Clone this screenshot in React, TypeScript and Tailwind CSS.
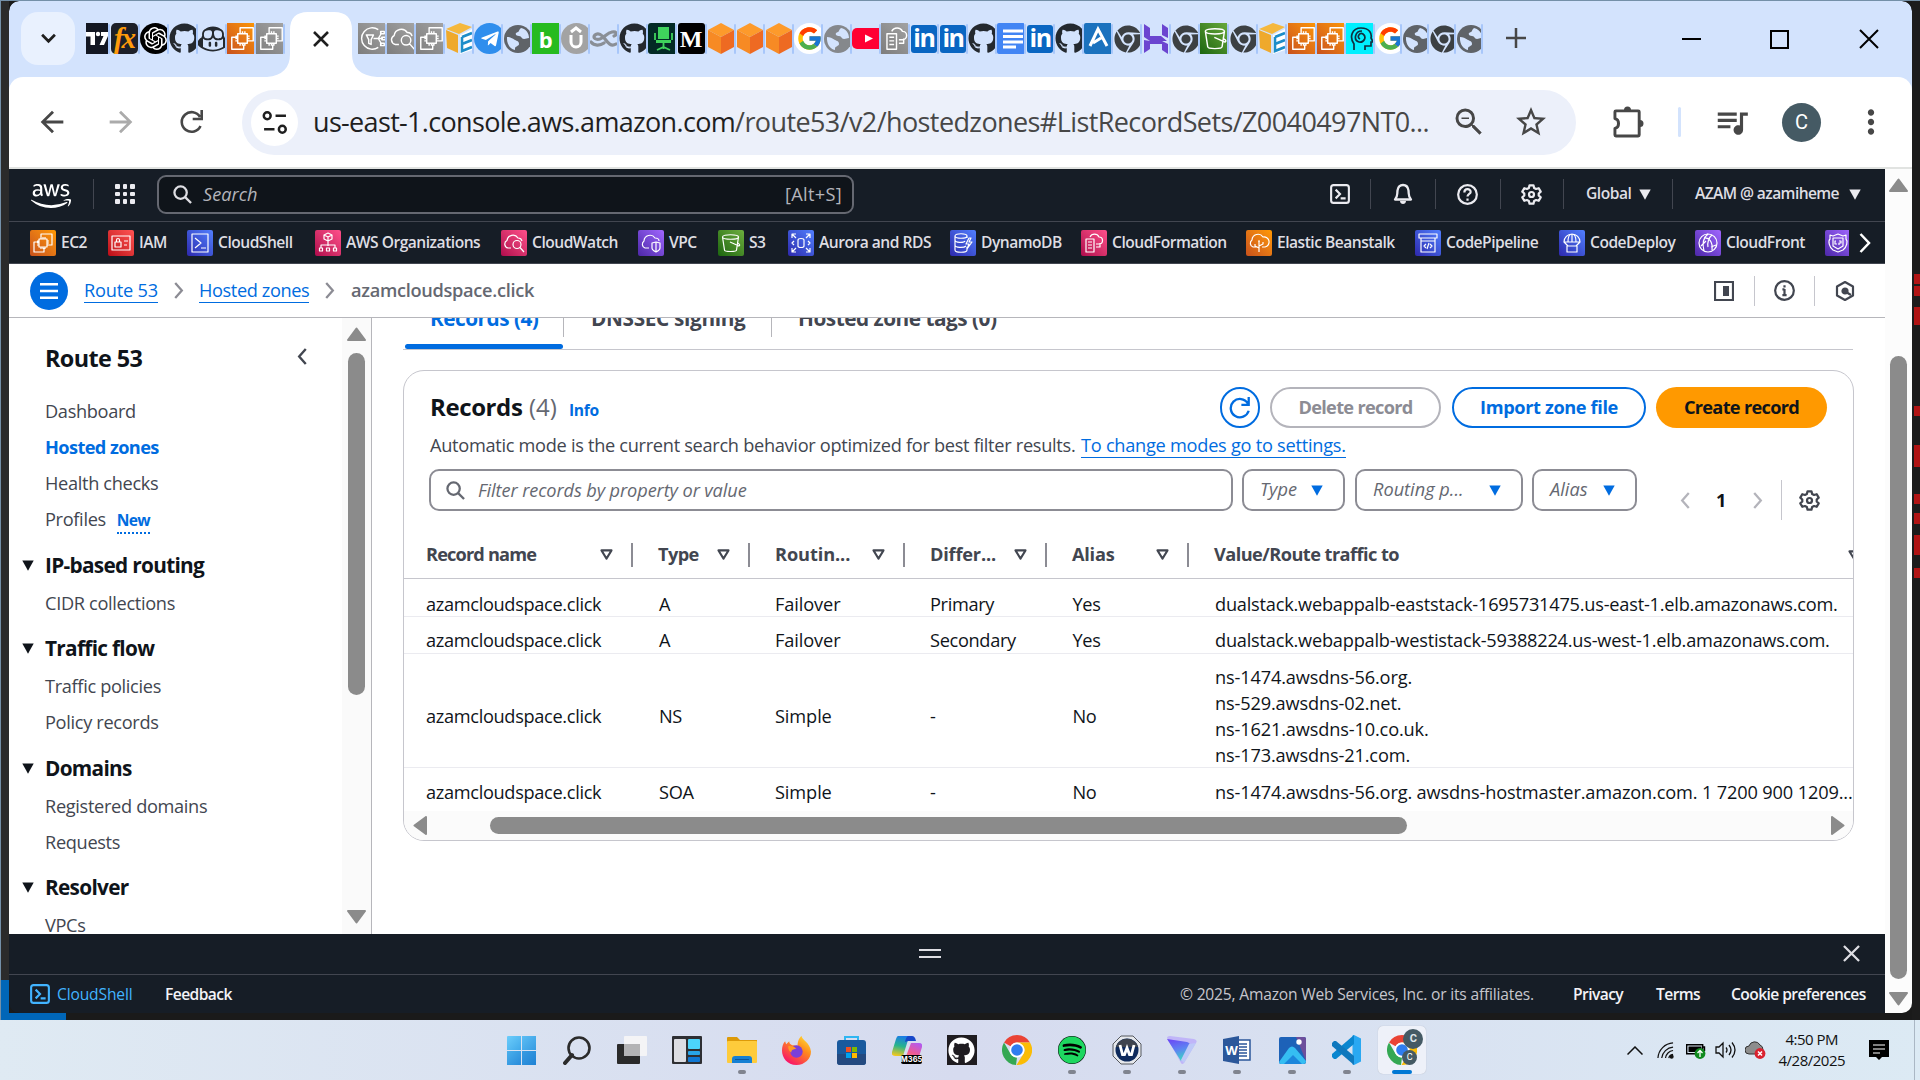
import React from "react";
import { FaGithub, FaTelegramPlane, FaChrome, FaSpotify, FaAws } from "react-icons/fa";
import { SiOpenai, SiGithubcopilot } from "react-icons/si";
import { FcGoogle } from "react-icons/fc";
import { MdArrowBack, MdArrowForward, MdQueueMusic, MdStarBorder, MdZoomOut, MdMoreVert } from "react-icons/md";

const ember = "font-['Open_Sans','Noto_Sans',sans-serif]";

/* ---------- AWS service glyphs ---------- */
const glyphs: Record<string, React.ReactNode> = {
  ec2b: <path d="M9 12H4V22H14V18M11 8V4H22V15H18M9 9h8v8H9zM11 7v2M13 7v2M15 7v2M11 17v2M13 17v2M15 17v2M7 11h2M7 13h2M7 15h2M17 11h2M17 13h2M17 15h2" />,
  iam: <path d="M4 6h18v14H4zM7 12h6v5H7zM8.500 12v-2a1.500 1.500 0 0 1 3 0v2M16 11h4M16 15h3" />,
  shell: <path d="M5 4h16v18H5zM8 8l6 5-6 5M14 18h5" />,
  org: <path d="M13 3l4 2v4l-4 2-4-2V5zM9 5l4 2 4-2M13 7v9M6 18v-3h14v3M4.500 18h3v3h-3zM11.500 18h3v3h-3zM18.500 18h3v3h-3z" />,
  watch: <path d="M10 18H7a4 4 0 0 1-1-7.500 6 6 0 0 1 11-2.500 4 4 0 0 1 4 3M12 14.500a4 4 0 1 0 8 0 4 4 0 1 0-8 0M19 17.500l4 4.500" />,
  vpc: <path d="M11 18H7a4 4 0 0 1-1-7 6 6 0 0 1 11-3c3 0 4 1 4 3M14 13l4-1 4 1v5c0 2-2 3-4 4-2-1-4-2-4-4zM18 12v10" />,
  s3: <path d="M4.500 7l2 13c0 2 12 2 12 0l2-13M4.500 7c0-3 16-3 16 0s-16 3-16 0M12 12l9 4c2-1-1-3-2-3" />,
  rds: <path d="M4 8V4h4M18 4h4v4M22 18v4h-4M8 22H4v-4M4 4l4 4M22 4l-4 4M22 22l-4-4M4 22l4-4M10 10c0-2 6-2 6 0v6c0 2-6 2-6 0zM6 11l-2 2 2 2M20 11l2 2-2 2" />,
  ddb: <path d="M5 6c0-3 12-3 12 0s-12 3-12 0v14c0 3 12 3 12 0v-3M17 6v2M5 10c0 3 9 3 10 1M5 15c0 3 9 3 11 1M19 8l-3 6h3l-2 5 5-7h-3l2-4z" />,
  cfn: <path d="M5 9h8v13H5zM7 12h4M7 15h4M7 18h4M15 17h4v-4M9 7a5 5 0 0 1 9 0 3.500 3.500 0 0 1 0 7h-3" />,
  eb: <path d="M10 17H7a4 4 0 0 1-1-7 6 6 0 0 1 11-3 5 5 0 0 1 2 10h-3M13 11v11M13 18l-4-2v-2M13 16l4-2v-2M12 11h2" />,
  pipe: <path d="M4 4h18v4H4zM6 8h14v3H6zM6 11v11h14V11M11 14l-2 2 2 2M15 14l2 2-2 2M14 13l-2 6" />,
  deploy: <path d="M5 12a8 8 0 0 1 16 0zM9 12c0-4 1-8 4-8s4 4 4 8M13 4v8M5 12l4 4M21 12l-4 4M8 16h10v6H8z" />,
  front: <path d="M4 13a9 9 0 1 0 18 0 9 9 0 1 0-18 0M13 4c-4 3-6 9-4 17M9 8c5-1 9 4 8 12M17 5c-3 2-5 8-4 12M6 16l5-5M16 17l5-2" />,
  shield: <path d="M5 5l3 1 5-2 5 2 3-1v4c2 2 1 8-3 11l-5 2-5-2c-4-3-5-9-3-11zM8 8h10v8l-5 3-5-3zM11 11h-1v3h2M14 11h2v2h-2v2" />,
  route: <path d="M17 5.500A9 9 0 1 0 17 20.500M7 10h6l-2 4v4l-2-1v-3zM13 13h4M17 13l3-5M17 13h4M17 13l3 5M19 7h3v2h-3zM20 12h3v2h-3zM19 17h3v2h-3z" />,
};

const tones = {
  orange: "bg-linear-to-tr from-[#c8511b] to-[#ff9900]",
  red: "bg-linear-to-tr from-[#bd0816] to-[#ff5252]",
  blue: "bg-linear-to-tr from-[#2e27ad] to-[#527fff]",
  pink: "bg-linear-to-tr from-[#b0084d] to-[#ff4f8b]",
  purple: "bg-linear-to-tr from-[#4d27a8] to-[#a166ff]",
  green: "bg-linear-to-tr from-[#1b660f] to-[#6cae3e]",
  gray: "bg-linear-to-tr from-[#7d7d7d] to-[#a5a5a5]",
};
type Tone = keyof typeof tones;

function Service({ g, tone, size = "size-[26px] rounded-[2px]" }: { g: string; tone: Tone; size?: string }) {
  return (
    <span className={`${tones[tone]} ${size} block shrink-0`}>
      <svg viewBox="0 0 26 26" className="size-full" fill="none" stroke="#fff" strokeWidth="1.2" strokeLinejoin="round">{glyphs[g]}</svg>
    </span>
  );
}

/* ---------- tab favicons ---------- */
const big = "size-[31px]";
const Globe = ({ c = "text-[#5f6368]" }: { c?: string }) => (
  <svg viewBox="0 0 28 28" className={`ml-px size-[28px] ${c}`}>
    <circle cx="14" cy="14" r="14" fill="currentColor" />
    <path d="M3 12c3 0 5 1 8 3 2 1 4 1 4 4 0 2-3 2-4 4v2C6 24 2.500 19 3 12zM17 3c5 1 8 5 8 10-2 0-3 1-5 1-3 0-2-3-5-3-2 0-4-1-3-3 1-1 3-1 3-2s1-2 2-3z" fill="#d3e3fd" />
  </svg>
);
const Hex = () => (
  <svg viewBox="0 0 31 31" className={big}>
    <path d="M1 7l13-7 13 7-13 7z" fill="#fd9a2b" /><path d="M1 7l13 7v17L1 24z" fill="#f78a24" /><path d="M27 7l-13 7v17l13-7z" fill="#ee6a22" />
  </svg>
);
const Cube = () => (
  <svg viewBox="0 0 31 31" className={big}>
    <path d="M1 6l14-6 12 4-13 7z" fill="#f5b83d" /><path d="M1 7l12 5v18L2 25z" fill="#efa92c" /><path d="M15 12l12-6v21l-12 4z" fill="#fff" />
    <path d="M17 14l10-4M17 14v14l10-4M17 21l10-4" stroke="#1c8dc9" strokeWidth="2.600" fill="none" />
  </svg>
);
const Doc = () => (
  <svg viewBox="0 0 31 31" className={big}>
    <rect width="28" height="31" rx="2" fill="#4285f4" /><path d="M6 8h20M6 13.500h20M6 19h20M6 24h13" stroke="#fff" strokeWidth="3" />
  </svg>
);
const In = () => <span className="ml-px flex h-[28px] w-[26px] items-center justify-center rounded-[3px] bg-[#0a66c2] pb-[2px] text-[25px] font-bold leading-none text-white font-['Open_Sans',sans-serif] tracking-[-1.5px]">in</span>;
const Git = () => <FaGithub className="size-[31px] text-[#24292f]" />;
const Chr = () => <FaChrome className="size-[28px] text-[#3c4043] ml-[1px]" />;

const tabsLeft: React.ReactNode[] = [
  <svg viewBox="0 0 31 31" className="size-[31px] -ml-[3px]"><rect width="31" height="31" fill="#131722" /><path d="M2 9h10v13H7.500v-8.500H2zM18 9h11v4h-4l-4 9h-4.500l4-9H18z" fill="#fff" /><circle cx="15" cy="11" r="2.200" fill="#fff" /></svg>,
  <span className="flex h-[31px] w-[27px] items-center justify-center rounded-[5px] bg-[#1d2029] text-[29px] font-bold italic leading-none text-[#ff9b0b] font-['Liberation_Serif',serif] tracking-[-2px]">fx</span>,
  <span className="flex size-[31px] items-center justify-center rounded-full bg-black"><SiOpenai className="size-[23px] text-white" /></span>,
  <Git />,
  <SiGithubcopilot className="size-[30px] text-[#24292f]" />,
  <Service g="ec2b" tone="orange" size="size-[31px]" />,
  <Service g="ec2b" tone="gray" size="size-[31px]" />,
];
const tabsRight: React.ReactNode[] = [
  <Service g="route" tone="gray" size="size-[31px]" />,
  <Service g="watch" tone="gray" size="size-[31px]" />,
  <Service g="ec2b" tone="gray" size="size-[31px]" />,
  <Cube />,
  <span className="flex size-[31px] items-center justify-center rounded-full bg-[#2f8eed]"><FaTelegramPlane className="size-[20px] text-white" /></span>,
  <Globe />,
  <span className="flex h-[31px] w-[27px] items-center justify-center bg-[#26bb1f] text-[22px] font-bold leading-none text-white font-['Open_Sans',sans-serif]">b</span>,
  <svg viewBox="0 0 31 31" className={big}><circle cx="15.500" cy="15.500" r="15.500" fill="#a3a3a3" /><path d="M10 12v7a5 5 0 0 0 10 0v-7M10 9l5-4 5 4" stroke="#fff" strokeWidth="3" fill="none" /></svg>,
  <svg viewBox="0 0 31 31" className={big}><path d="M26 21c-5 3-8-1-11-5S8 9 5 12s1 5 5 4 7-6 12-7 5 3 2 4M1 19c3 4 9 4 13 1" stroke="#8a8f96" strokeWidth="3.200" fill="none" strokeLinecap="round" /></svg>,
  <Git />,
  <svg viewBox="0 0 31 31" className={big}><rect width="31" height="31" rx="3" fill="#032a25" /><path d="M10 4h11v12H10zM8 17h15v3H8z" fill="#3fd35c" /><path d="M15.500 20v6M9 27l6.500-3 6.500 3M7 10v7M24 10v7" stroke="#3fd35c" strokeWidth="1.800" fill="none" /></svg>,
  <span className="flex h-[31px] w-[27px] items-center justify-center rounded-[3px] bg-black text-[24px] font-bold leading-none text-white font-['Liberation_Serif',serif]">M</span>,
  <Hex />, <Hex />, <Hex />,
  <span className="flex size-[31px] items-center justify-center rounded-full bg-white"><FcGoogle className="size-[27px]" /></span>,
  <Globe c="text-[#85888c]" />,
  <svg viewBox="0 0 31 31" className={big}><rect y="5" width="31" height="21" rx="5" fill="#ff0033" /><path d="M13 11.500l8 4-8 4z" fill="#fff" /></svg>,
  <Service g="cfn" tone="gray" size="size-[31px]" />,
  <In />, <In />, <Git />, <Doc />, <In />, <Git />,
  <svg viewBox="0 0 31 31" className={big}><rect width="31" height="31" rx="2" fill="#1b72be" /><path d="M6 23L14 6l9 17M9 20l8-5" stroke="#fff" strokeWidth="3" fill="none" /></svg>,
  <Chr />,
  <svg viewBox="0 0 31 31" className={big}><path d="M2 1l6 4v8h11l6 5H8l-6-4zM20 1l6 4v10l-6-3zM2 17l6 1h12l6 3v10l-6-4v-6H8v5l-6 4z" fill="#6b45d0" /></svg>,
  <Chr />,
  <Service g="s3" tone="green" size="size-[31px]" />,
  <Chr />,
  <Cube />,
  <Service g="ec2b" tone="orange" size="size-[31px]" />,
  <Service g="ec2b" tone="orange" size="size-[31px]" />,
  <svg viewBox="0 0 31 31" className={big}><rect width="31" height="31" fill="#00f0ff" /><path d="M8 27v-6C3 14 6 5 15 5s11 6 10 10l2 4h-2v4h-6v4M14 16c-4-2 0-7 3-5 4 3 1 9-4 8-6-2-4-11 3-11" stroke="#103040" strokeWidth="1.700" fill="none" /></svg>,
];
const tabsEnd: React.ReactNode[] = [
  <span className="flex size-[31px] items-center justify-center rounded-full bg-white"><FcGoogle className="size-[27px]" /></span>,
  <Globe />, <Chr />, <Globe />,
];

const cell = {
  first: ["w-[24.500px]", "w-[22px]"],
  normal: ["w-[29.050px]", "w-[27px]"],
  narrow: ["w-[27px]", "w-[25px]"],
};

function Favicon({ children, kind = "normal" }: { children: React.ReactNode; kind?: keyof typeof cell }) {
  return (
    <div className={`flex h-[31px] shrink-0 items-center ${cell[kind][0]}`}>
      <div className={`flex h-[31px] shrink-0 items-center overflow-hidden ${cell[kind][1]}`}><div className="shrink-0">{children}</div></div>
      <div className="h-[30px] w-[2px] shrink-0 rounded-full bg-[#a8c7fa]" />
    </div>
  );
}

function TabStrip() {
  return (
    <div className="flex h-[76px] shrink-0 bg-[#d3e3fd] rounded-t-[10px]">
      <div className="mt-[11px] ml-[12px] flex h-[53px] w-[54px] items-center justify-center rounded-[17px] bg-[#e9f1fe]">
        <svg viewBox="0 0 18 12" className="h-[11px] w-[17px]" fill="none" stroke="#1f1f1f" strokeWidth="3"><path d="M2 2l7 7 7-7" /></svg>
      </div>
      <div className="mt-[22px] ml-[11px] flex w-[204px]">{tabsLeft.map((t, i) => <Favicon key={i} kind={i === 0 ? "first" : "normal"}>{t}</Favicon>)}</div>
      <svg viewBox="0 0 110 65" className="mt-[11px] -ml-[23px] h-[65px] w-[110px] shrink-0">
        <path d="M0 65Q23 63 23 42V18Q23 0 41 0H67Q85 0 85 18V42Q85 63 110 65Z" fill="#fff" />
        <path d="M47 20l14 14M61 20L47 34" stroke="#1f1f1f" strokeWidth="2.600" />
      </svg>
      <div className="mt-[22px] -ml-[19px] flex">
        {tabsRight.map((t, i) => <Favicon key={i}>{t}</Favicon>)}
        {tabsEnd.map((t, i) => <Favicon key={i} kind="narrow">{t}</Favicon>)}
      </div>
      <svg viewBox="0 0 20 20" className="mt-[27px] ml-[23px] size-[20px] shrink-0" stroke="#474747" strokeWidth="2.500"><path d="M10 0v20M0 10h20" /></svg>
      <svg viewBox="0 0 20 20" className="mt-[27px] ml-[156px] size-[20px] shrink-0" stroke="#000" strokeWidth="2"><path d="M0 11h19" /></svg>
      <svg viewBox="0 0 20 20" className="mt-[28px] ml-[68px] size-[20px] shrink-0" stroke="#000" strokeWidth="2" fill="none"><path d="M1 2h17v17H1z" /></svg>
      <svg viewBox="0 0 20 20" className="mt-[28px] ml-[69px] size-[20px] shrink-0" stroke="#000" strokeWidth="2"><path d="M1 1l18 18M19 1L1 19" /></svg>
    </div>
  );
}

function Toolbar() {
  return (
    <div className="shrink-0 bg-[#d3e3fd]">
      <div className="flex h-[92px] items-center rounded-t-[14px] border-b-2 border-[#e1e3e1] bg-white">
        <MdArrowBack className="ml-[26px] size-[34px] text-[#474747]" />
        <MdArrowForward className="ml-[35px] size-[34px] text-[#ababab]" />
        <svg viewBox="0 0 24 24" className="ml-[42px] size-[24px]" fill="none" stroke="#474747" strokeWidth="2.600"><path d="M20.500 16A9.800 9.800 0 1 1 20 7M21.700 0v9h-9" /></svg>
        <div className="ml-[38px] flex h-[65px] w-[1334px] items-center rounded-full bg-[#ecf0fa]">
          <div className="ml-[9px] flex size-[47px] items-center justify-center rounded-full bg-white">
            <svg viewBox="0 0 24 24" className="size-[25px]" fill="none" stroke="#1f1f1f" strokeWidth="2.400"><circle cx="5" cy="5.500" r="3.300" /><path d="M13 5.500h10M2 18.500h10" /><circle cx="19.500" cy="18.500" r="3.300" /></svg>
          </div>
          <div className="ml-[15px] w-[1117px] whitespace-nowrap font-['Open_Sans',sans-serif] text-[27px] tracking-[-0.6px] text-[#474747]">
            <span className="tracking-[-0.67px] text-[#1f1f1f]">us-east-1.console.aws.amazon.com</span>/route53/v2/hostedzones#ListRecordSets/Z0040497NT0...
          </div>
          <MdZoomOut className="ml-[21px] size-[36px] text-[#474747]" />
          <MdStarBorder className="ml-[26px] size-[36px] text-[#474747]" />
        </div>
        <svg viewBox="0 0 32 32" className="ml-[37px] size-[32px]" fill="none" stroke="#474747" strokeWidth="3" strokeLinejoin="round">
          <path d="M3 5h23q1 0 1 1v24q0 1-1 1H3q-1 0-1-1v-7c5-1 5-9 0-10V6q0-1 1-1z" transform="scale(.97)" /><path d="M11 4a3.500 3.500 0 0 1 7 0zM27 14a3.500 3.500 0 0 1 0 7z" fill="#474747" stroke="none" />
        </svg>
        <div className="ml-[33px] h-[30px] w-[3px] rounded bg-[#d3e3fd]" />
        <MdQueueMusic className="ml-[32px] size-[38px] text-[#474747]" />
        <div className="ml-[31px] flex size-[39px] items-center justify-center rounded-full bg-[#455a64] font-['Roboto',sans-serif] text-[20px] text-white">C</div>
        <MdMoreVert className="ml-[31px] size-[38px] text-[#474747]" />
      </div>
    </div>
  );
}

/* ---------- AWS header ---------- */
const V = ({ c = "bg-[#424650]" }: { c?: string }) => <div className={`h-[30px] w-px shrink-0 ${c}`} />;
const Tri = ({ c }: { c: string }) => <svg viewBox="0 0 12 11" className={`h-[11px] w-[12px] shrink-0 ${c}`} fill="currentColor"><path d="M.3.500h11.400L6 10.800z" /></svg>;
const Gear = ({ c }: { c: string }) => (
  <svg viewBox="0 0 16 16" className={`size-[21px] shrink-0 ${c}`} fill="none" stroke="currentColor" strokeWidth="1.700" strokeLinejoin="round">
    <path d="M6.500 1h3l.5 2 1.500.8 2-.6 1.500 2.600L13.500 7.300v1.400L15 10.200l-1.500 2.600-2-.6-1.500.8-.5 2h-3L6 13l-1.500-.8-2 .6L1 10.200l1.500-1.500V7.300L1 5.800l1.500-2.600 2 .6L6 3z" /><circle cx="8" cy="8" r="1.900" />
  </svg>
);
const Shell = ({ c }: { c: string }) => (
  <svg viewBox="0 0 16 16" className={`size-[20px] shrink-0 ${c}`} fill="none" stroke="currentColor" strokeWidth="1.700"><rect x=".9" y=".9" width="14.200" height="14.200" rx="2" /><path d="M4.500 4.500L8 8l-3.500 3.500M8.500 11.500h4" /></svg>
);
const Lens = ({ c }: { c: string }) => (
  <svg viewBox="0 0 20 20" className={`size-[19px] shrink-0 ${c}`} fill="none" stroke="currentColor" strokeWidth="2.400"><circle cx="8" cy="8" r="6.500" /><path d="M12.500 12.500l6.500 6.500" /></svg>
);

const favorites: { g: string; tone: Tone; label: string; w: string }[] = [
  { g: "ec2b", tone: "orange", label: "EC2", w: "w-[78px]" },
  { g: "iam", tone: "red", label: "IAM", w: "w-[79px]" },
  { g: "shell", tone: "blue", label: "CloudShell", w: "w-[128px]" },
  { g: "org", tone: "pink", label: "AWS Organizations", w: "w-[186px]" },
  { g: "watch", tone: "pink", label: "CloudWatch", w: "w-[137px]" },
  { g: "vpc", tone: "purple", label: "VPC", w: "w-[80px]" },
  { g: "s3", tone: "green", label: "S3", w: "w-[70px]" },
  { g: "rds", tone: "blue", label: "Aurora and RDS", w: "w-[162px]" },
  { g: "ddb", tone: "blue", label: "DynamoDB", w: "w-[131px]" },
  { g: "cfn", tone: "pink", label: "CloudFormation", w: "w-[165px]" },
  { g: "eb", tone: "orange", label: "Elastic Beanstalk", w: "w-[169px]" },
  { g: "pipe", tone: "blue", label: "CodePipeline", w: "w-[144px]" },
  { g: "deploy", tone: "blue", label: "CodeDeploy", w: "w-[136px]" },
  { g: "front", tone: "purple", label: "CloudFront", w: "w-[130px]" },
];

function AwsHeader() {
  return (
    <header className="shrink-0 bg-[#161d26] text-[#dedee3]">
      <div className="flex h-[53px] items-center border-b border-[#424650] pb-[2px]">
        <FaAws className="mt-[3px] ml-[22px] size-[40px] text-white" />
        <div className="ml-[22px]"><V /></div>
        <div className="ml-[21px] grid size-[20px] grid-cols-3 gap-[3px]">
          {Array.from({ length: 9 }, (_, i) => <span key={i} className="rounded-[1px] bg-[#ebebf0]" />)}
        </div>
        <div className="ml-[22px] flex h-[39px] w-[697px] items-center rounded-[9px] border-2 border-[#656871] bg-[#0f141a] pl-[14px] pr-[10px] text-[18.200px] text-[#b4b4bb]">
          <Lens c="text-[#dedee3]" />
          <span className="mt-px ml-[11px] flex-1 italic">Search</span>
          <span className="mt-px tracking-[0.3px]">[Alt+S]</span>
        </div>
        <div className="ml-[476px] flex w-[30px] justify-start"><Shell c="text-[#ebebf0]" /></div>
        <div className="ml-[10px]"><V /></div>
        <svg viewBox="0 0 20 22" className="ml-[22px] h-[22px] w-[20px]" fill="none" stroke="#ebebf0" strokeWidth="2.300"><path d="M2 16.500c3-3 2-5 2.500-9C5 4 7 2 10 2s5 2 5.500 5.500c.5 4-.5 6 2.500 9z" strokeLinejoin="round" /><path d="M7 18c0 4 6 4 6 0z" fill="#ebebf0" stroke="none" /></svg>
        <div className="ml-[22px]"><V /></div>
        <svg viewBox="0 0 20 20" className="ml-[21px] size-[21px]" fill="none" stroke="#ebebf0" strokeWidth="2.100"><circle cx="10" cy="10" r="8.900" /><path d="M7 8c0-4 6-4 6-.5 0 2-3 2-3 4.500" /><path d="M10 13.700v2.300" /></svg>
        <div className="ml-[22px]"><V /></div>
        <div className="ml-[20px]"><Gear c="text-[#ebebf0]" /></div>
        <div className="ml-[21px]"><V /></div>
        <div className="ml-[22px] w-[53px] text-[15.600px] font-semibold tracking-[-0.5px]">Global</div>
        <Tri c="text-[#ebebf0]" />
        <div className="ml-[21px]"><V /></div>
        <div className="ml-[22px] w-[154px] whitespace-nowrap text-[15.600px] font-semibold tracking-[-0.6px]">AZAM @ azamiheme</div>
        <Tri c="text-[#ebebf0]" />
      </div>
      <div className="flex h-[42px] items-center border-b border-[#424650] pl-[21px]">
        {favorites.map((f) => (
          <div key={f.label} className={`flex shrink-0 items-center ${f.w}`}>
            <Service g={f.g} tone={f.tone} />
            <span className="ml-[5px] whitespace-nowrap text-[15.600px] font-semibold tracking-[-0.5px]">{f.label}</span>
          </div>
        ))}
        <div className="w-[24px] overflow-hidden"><Service g="shield" tone="purple" /></div>
        <svg viewBox="0 0 12 20" className="ml-[10px] h-[20px] w-[12px] shrink-0" fill="none" stroke="#fff" strokeWidth="2.500"><path d="M1.500 1l8.500 9-8.500 9" /></svg>
      </div>
    </header>
  );
}

const Chevron = () => <svg viewBox="0 0 10 18" className="h-[17px] w-[10px] shrink-0" fill="none" stroke="#8c8c94" strokeWidth="2.400"><path d="M1 1l7 8-7 8" /></svg>;

function Breadcrumbs() {
  return (
    <div className="flex h-[54px] shrink-0 items-center border-b border-[#b6b6bb] bg-white text-[18.200px]">
      <div className="ml-[21px] flex size-[38px] shrink-0 items-center justify-center rounded-full bg-[#006ce0]">
        <svg viewBox="0 0 18 16" className="h-[16px] w-[18px]" stroke="#fff" strokeWidth="2.400"><path d="M0 1.200h18M0 8h18M0 14.800h18" /></svg>
      </div>
      <div className="mt-px ml-[16px] w-[90px]"><span className="whitespace-nowrap border-b border-[#006ce0] tracking-[-0.2px] text-[#006ce0]">Route 53</span></div>
      <Chevron />
      <div className="mt-px ml-[15px] w-[126px]"><span className="whitespace-nowrap border-b border-[#006ce0] tracking-[-0.4px] text-[#006ce0]">Hosted zones</span></div>
      <Chevron />
      <span className="mt-px ml-[16px] w-[183px] whitespace-nowrap font-semibold tracking-[-0.3px] text-[#656871]">azamcloudspace.click</span>
      <svg viewBox="0 0 20 20" className="ml-[1180px] size-[20px] shrink-0"><path d="M1 1h18v18H1z" fill="none" stroke="#424650" strokeWidth="2.200" /><path d="M9 5h6v10H9z" fill="#424650" /></svg>
      <div className="ml-[20px]"><V c="bg-[#c6c6cd]" /></div>
      <svg viewBox="0 0 20 20" className="ml-[19px] size-[21px] shrink-0" fill="none" stroke="#424650" strokeWidth="2.100"><circle cx="10" cy="10" r="8.900" /><path d="M10 8.500v6M10 5v2.200M8 9h2M8 14.500h4" /></svg>
      <div className="ml-[19px]"><V c="bg-[#c6c6cd]" /></div>
      <svg viewBox="0 0 20 20" className="ml-[20px] size-[20px] shrink-0" fill="none" stroke="#424650" strokeWidth="2.200"><path d="M10 1l8 4.500v9L10 19l-8-4.500v-9z" strokeLinejoin="round" /><circle cx="10" cy="10" r="2.500" fill="#424650" /><path d="M11 11l5 3" /></svg>
    </div>
  );
}

const ArrowUp = () => <svg viewBox="0 0 19 14" className="h-[14px] w-[19px]" fill="#8b8b8b" stroke="#8b8b8b" strokeWidth="2" strokeLinejoin="round"><path d="M9.500 1.500L18 13H1z" /></svg>;
const ArrowDown = () => <svg viewBox="0 0 19 14" className="h-[14px] w-[19px]" fill="#8b8b8b" stroke="#8b8b8b" strokeWidth="2" strokeLinejoin="round"><path d="M9.500 12.500L18 1H1z" /></svg>;

const Item = ({ children, active }: { children: React.ReactNode; active?: boolean }) => (
  <div className={`flex h-[36px] items-center whitespace-nowrap pl-[36px] ${active ? "font-bold tracking-[-0.6px] text-[#006ce0]" : "tracking-[-0.33px] text-[#424650]"}`}>{children}</div>
);
const Section = ({ children }: { children: React.ReactNode }) => (
  <div className="mt-[10px] mb-[3px] flex h-[34.500px] items-center pl-[13px] text-[20.800px] font-bold tracking-[-0.7px] text-[#0f141a]"><Tri c="text-[#0f141a]" /><span className="ml-[11px] whitespace-nowrap">{children}</span></div>
);

function Sidebar() {
  return (
    <aside className="flex w-[363px] shrink-0 border-r border-[#b6b6bb] bg-white">
      <div className="w-[333px] overflow-hidden text-[18.200px]">
        <div className="mt-[23px] mb-[17px] flex h-[36px] items-center pl-[36px]">
          <span className="w-[252px] text-[23.400px] font-bold tracking-[-0.6px] text-[#0f141a]">Route 53</span>
          <svg viewBox="0 0 10 18" className="mb-[5px] h-[17px] w-[10px]" fill="none" stroke="#424650" strokeWidth="2.500"><path d="M9 1L2 9l7 8" /></svg>
        </div>
        <Item>Dashboard</Item>
        <Item active>Hosted zones</Item>
        <Item>Health checks</Item>
        <Item>Profiles<span className="mt-[2px] ml-[11px] border-b-2 border-dotted border-[#006ce0] text-[15.600px] font-bold leading-[24px] tracking-[-0.7px] text-[#006ce0]">New</span></Item>
        <Section>IP-based routing</Section>
        <Item>CIDR collections</Item>
        <Section>Traffic flow</Section>
        <Item>Traffic policies</Item>
        <Item>Policy records</Item>
        <Section>Domains</Section>
        <Item>Registered domains</Item>
        <Item>Requests</Item>
        <Section>Resolver</Section>
        <Item>VPCs</Item>
      </div>
      <div className="flex w-[29px] flex-col items-center bg-[#fafafa] pt-[9px]">
        <ArrowUp />
        <div className="mt-[12px] mb-[222px] h-[342px] w-[17px] shrink-0 rounded-full bg-[#8b8b8b]" />
        <div className="-mt-[7px]"><ArrowDown /></div>
      </div>
    </aside>
  );
}

const Sort = () => <svg viewBox="0 0 14 12" className="h-[11px] w-[13px] shrink-0" fill="none" stroke="#424650" strokeWidth="2.200" strokeLinejoin="round"><path d="M1.500 1.500h11L7 10.500z" /></svg>;
const cols: { t: string; w: string; s: string }[] = [
  { t: "Record name", w: "w-[232px]", s: "tracking-[-0.85px]" },
  { t: "Type", w: "w-[117px]", s: "tracking-[-0.6px]" },
  { t: "Routin...", w: "w-[155px]", s: "tracking-[-0.1px]" },
  { t: "Differ...", w: "w-[142px]", s: "tracking-[-0.2px]" },
  { t: "Alias", w: "w-[142px]", s: "tracking-[-0.25px]" },
];

function Row({ cells, h, s = "tracking-[-0.22px]" }: { cells: (string | string[])[]; h: string; s?: string }) {
  return (
    <div className={`flex items-center border-b border-[#ebebf0] pl-[22px] leading-[26px] tracking-[-0.33px] ${h}`}>
      <div className="w-[233px] shrink-0">{cells[0]}</div>
      <div className="w-[116px] shrink-0">{cells[1]}</div>
      <div className="w-[155px] shrink-0 tracking-[-0.1px]">{cells[2]}</div>
      <div className="w-[142.500px] shrink-0">{cells[3]}</div>
      <div className="w-[142.500px] shrink-0">{cells[4]}</div>
      <div className={`whitespace-nowrap ${s}`}>{Array.isArray(cells[5]) ? cells[5].map((v) => <div key={v}>{v}</div>) : cells[5]}</div>
    </div>
  );
}

const Select = ({ label, w }: { label: string; w: string }) => (
  <div className={`flex h-[42px] shrink-0 items-center justify-between rounded-[10px] border-2 border-[#8c8c94] pl-[16px] pr-[20px] italic text-[#656871] ${w}`}>{label}<Tri c="text-[#006ce0]" /></div>
);

function Records() {
  return (
    <main className="w-[1513px] overflow-hidden bg-white text-[18.200px]">
      <div className="ml-[31px] flex h-[32px] w-[1450px] border-b border-[#c6c6cd] text-[20.800px] font-bold tracking-[-0.5px] text-[#424650]">
        <div className="flex h-[32px] w-[161px] shrink-0 flex-col">
          <div className="flex h-[19px] border-r border-[#b6b6bb] pl-[27px] text-[#006ce0]"><span className="-mt-[16px] whitespace-nowrap leading-[32px]">Records (4)</span></div>
          <div className="mt-[7px] ml-[2px] h-[5px] w-[158px] rounded-full bg-[#006ce0]" />
        </div>
        <div className="flex h-[19px] w-[208px] shrink-0 border-r border-[#b6b6bb] pl-[27px] tracking-[-0.35px]"><span className="-mt-[16px] whitespace-nowrap leading-[32px]">DNSSEC signing</span></div>
        <div className="flex h-[19px] pl-[26px]"><span className="-mt-[16px] whitespace-nowrap leading-[32px]">Hosted zone tags (0)</span></div>
      </div>
      <section className="mt-[20px] ml-[31px] flex h-[471px] w-[1451px] flex-col overflow-hidden rounded-[21px] border border-[#c6c6cd]">
        <div className="mt-[16px] flex h-[41px] items-center pl-[26px] pr-[26px] font-bold tracking-[-0.7px]">
          <span className="-mt-[2px] w-[99px] whitespace-nowrap text-[24px] tracking-[-0.4px] text-[#0f141a]">Records</span>
          <span className="-mt-[2px] w-[40px] text-[24px] font-normal tracking-normal text-[#656871]">(4)</span>
          <span className="mt-[6px] flex-1 text-[15.600px] tracking-[-0.3px] text-[#006ce0]">Info</span>
          <div className="flex h-[41px] w-[40px] items-center justify-center rounded-full border-2 border-[#006ce0]">
            <svg viewBox="0 0 24 24" className="size-[22px]" fill="none" stroke="#006ce0" strokeWidth="2.500"><path d="M21.500 15A10 10 0 1 1 20.500 7M21.500 0v8.500h-8" /></svg>
          </div>
          <div className="ml-[10px] flex h-[41px] w-[171px] items-center justify-center rounded-full border-2 border-[#b4b4bb] text-[#8c8c94]">Delete record</div>
          <div className="ml-[11px] flex h-[41px] w-[194px] items-center justify-center rounded-full border-2 border-[#006ce0] tracking-[-0.38px] text-[#006ce0]">Import zone file</div>
          <div className="ml-[10px] flex h-[41px] w-[171px] items-center justify-center rounded-full bg-[#ff9900] text-[#0f141a]">Create record</div>
        </div>
        <div className="mt-[5px] flex h-[26px] items-center whitespace-nowrap pl-[26px] text-[#424650]">
          <span className="w-[651px] tracking-[-0.3px]">Automatic mode is the current search behavior optimized for best filter results.</span>
          <span className="border-b border-[#006ce0] leading-[23px] tracking-[-0.26px] text-[#006ce0]">To change modes go to settings.</span>
        </div>
        <div className="mt-[10px] flex h-[42px] pl-[25px]">
          <div className="flex h-[42px] w-[804px] items-center rounded-[10px] border-2 border-[#8c8c94] pl-[15px] italic text-[#656871]">
            <Lens c="text-[#656871]" /><span className="mt-px ml-[13px] tracking-[-0.1px]">Filter records by property or value</span>
          </div>
          <div className="ml-[9px]"><Select label="Type" w="w-[103px]" /></div>
          <div className="ml-[10px]"><Select label="Routing p..." w="w-[168px]" /></div>
          <div className="ml-[9px]"><Select label="Alias" w="w-[105px]" /></div>
          <div className="mt-[11px] flex h-[40px] items-center">
            <svg viewBox="0 0 10 18" className="ml-[43px] h-[17px] w-[10px]" fill="none" stroke="#b4b4bb" strokeWidth="2.400"><path d="M9 1L2 9l7 8" /></svg>
            <span className="mt-px ml-[26px] w-[10px] font-bold text-[#0f141a]">1</span>
            <svg viewBox="0 0 10 18" className="ml-[27px] h-[17px] w-[10px]" fill="none" stroke="#b4b4bb" strokeWidth="2.400"><path d="M1 1l7 8-7 8" /></svg>
            <div className="ml-[18px] h-[40px] w-px bg-[#c6c6cd]" />
            <div className="ml-[17px]"><Gear c="text-[#424650]" /></div>
          </div>
        </div>
        <div className="mt-[10px] flex h-[58px] shrink-0 items-center border-b border-[#c6c6cd] pl-[22px] pt-[11px] font-bold text-[#424650]">
          {cols.map((c) => (
            <div key={c.t} className={`flex shrink-0 items-center pr-[25px] ${c.w}`}>
              <span className={`flex-1 whitespace-nowrap ${c.s}`}>{c.t}</span><Sort />
              <div className="ml-[18px] h-[24px] w-[2px] bg-[#8c8c94]" />
            </div>
          ))}
          <span className="w-[634px] shrink-0 tracking-[-0.55px]">Value/Route traffic to</span><Sort />
        </div>
        <div className="h-[232px] shrink-0 overflow-hidden text-[#0f141a]">
          <Row h="h-[38px] pt-[13px]" cells={["azamcloudspace.click", "A", "Failover", "Primary", "Yes", "dualstack.webappalb-eaststack-1695731475.us-east-1.elb.amazonaws.com."]} />
          <Row h="h-[37px] pt-[10px]" cells={["azamcloudspace.click", "A", "Failover", "Secondary", "Yes", "dualstack.webappalb-westistack-59388224.us-west-1.elb.amazonaws.com."]} />
          <Row h="h-[114px] pt-[11px]" s="tracking-[-0.15px]" cells={["azamcloudspace.click", "NS", "Simple", "-", "No", ["ns-1474.awsdns-56.org.", "ns-529.awsdns-02.net.", "ns-1621.awsdns-10.co.uk.", "ns-173.awsdns-21.com."]]} />
          <Row h="h-[60px] pb-[11px]" s="tracking-[-0.15px]" cells={["azamcloudspace.click", "SOA", "Simple", "-", "No", "ns-1474.awsdns-56.org. awsdns-hostmaster.amazon.com. 1 7200 900 1209..."]} />
        </div>
        <div className="flex h-[29px] shrink-0 items-center bg-[#fbfbfb] pb-px">
          <svg viewBox="0 0 14 19" className="ml-[9px] h-[19px] w-[14px]" fill="#8b8b8b" stroke="#8b8b8b" strokeWidth="2" strokeLinejoin="round"><path d="M1.500 9.500L13 1v17z" /></svg>
          <div className="ml-[63px] h-[17px] w-[917px] rounded-full bg-[#8b8b8b]" />
          <svg viewBox="0 0 14 19" className="ml-[424px] h-[19px] w-[14px]" fill="#8b8b8b" stroke="#8b8b8b" strokeWidth="2" strokeLinejoin="round"><path d="M12.500 9.500L1 1v17z" /></svg>
        </div>
      </section>
    </main>
  );
}

function Footer() {
  return (
    <footer className="h-[79px] shrink-0 rounded-bl-[10px] bg-[#161d26] text-[15.600px]">
      <div className="flex h-[41px] items-center border-b border-[#424650] pb-[2px]">
        <svg viewBox="0 0 22 9" className="ml-[910px] h-[9px] w-[22px]" stroke="#dedee3" strokeWidth="2"><path d="M0 1h22M0 8h22" /></svg>
        <svg viewBox="0 0 18 18" className="ml-[902px] size-[17px]" stroke="#dedee3" strokeWidth="2.400"><path d="M1 1l16 16M17 1L1 17" /></svg>
      </div>
      <div className="flex h-[38px] items-center whitespace-nowrap pt-px font-semibold tracking-[-0.58px] text-[#f3f3f7]">
        <div className="ml-[21px] pb-px"><Shell c="text-[#42b4ff]" /></div>
        <span className="ml-[7px] w-[108px] font-normal tracking-[-0.15px] text-[#42b4ff]">CloudShell</span>
        <span className="w-[1015px]">Feedback</span>
        <span className="w-[393px] font-normal tracking-[-0.19px] text-[#c6c6cd]">© 2025, Amazon Web Services, Inc. or its affiliates.</span>
        <span className="w-[83px]">Privacy</span>
        <span className="w-[75px]">Terms</span>
        <span>Cookie preferences</span>
      </div>
    </footer>
  );
}

/* ---------- Windows taskbar ---------- */
const taskIcons: { el: React.ReactNode; run?: boolean; active?: boolean }[] = [
  { el: <div className="grid size-[29px] grid-cols-2 gap-px"><i className="rounded-tl-[1px] bg-linear-to-br from-[#6ccdfb] to-[#3fa9ea]" /><i className="bg-linear-to-br from-[#5bbdf4] to-[#379ce2]" /><i className="bg-linear-to-br from-[#4bb0ec] to-[#288bda]" /><i className="bg-linear-to-br from-[#389ce2] to-[#1f82d4]" /></div> },
  { el: <svg viewBox="0 0 28 30" className="h-[30px] w-[28px]" fill="none" stroke="#2b2b2b"><circle cx="16" cy="13" r="10.500" strokeWidth="2.600" /><path d="M9 20l-7 8" strokeWidth="4" strokeLinecap="round" /></svg> },
  { el: <svg viewBox="0 0 30 28" className="h-[28px] w-[30px]"><rect y="8" width="23" height="20" rx="1" fill="#2a2a2a" /><rect x="7" y="0" width="23" height="20" rx="1" fill="#f4f4f6" /><rect x="7" y="8" width="16" height="12" fill="#b3b3b5" /></svg> },
  { el: <svg viewBox="0 0 30 28" className="h-[28px] w-[30px]"><rect width="30" height="28" rx="1" fill="#2e2f33" /><rect x="2" y="3" width="12" height="23" rx="1" fill="#dcdde2" /><rect x="16" y="3" width="12" height="10" rx="1" fill="#4cd4fb" /><rect x="16" y="15" width="12" height="4" rx="1" fill="#28a5e8" /><rect x="16" y="21" width="12" height="5" rx="1" fill="#0f78d4" /></svg> },
  { el: <svg viewBox="0 0 30 28" className="h-[28px] w-[30px]"><path d="M0 2q0-1 1-1h9l3 3h17v8H0z" fill="#dd9a08" /><rect y="5" width="30" height="22" rx="1" fill="#fecb3b" /><path d="M5 27v-4q0-3 3-3h14q3 0 3 3v4z" fill="#1680d3" /><path d="M8 23.500h14" stroke="#0b569d" /></svg>, run: true },
  { el: (
    <svg viewBox="0 0 28 28" className="size-[29px]">
      <defs><linearGradient id="ff" x1="1" y1="0" x2="0.300" y2="1"><stop offset="0" stopColor="#fff03a" /><stop offset=".45" stopColor="#ff8a1c" /><stop offset="1" stopColor="#f8116b" /></linearGradient></defs>
      <path d="M14 28C5 28 0 21 0 14c0-4 1-7 3-9l1 3 3-3c0 2 1 3 3 4 2 0 4 0 5 1 0-4 1-8 4-10 0 4 8 6 9 15 0 7-6 13-14 13z" fill="url(#ff)" /><circle cx="14" cy="15" r="6" fill="#7a3fd8" /><path d="M6 10c4-1 6 1 8 2-3 1-5 1-5 4-2-1-3-3-3-6z" fill="#ff9a22" />
    </svg>) },
  { el: <svg viewBox="0 0 29 29" className="size-[29px]"><path d="M8 6V1h13v5" fill="none" stroke="#2fb6f2" strokeWidth="2" /><rect y="4" width="29" height="25" rx="3" fill="#195a9e" /><path d="M0 18h29v8q0 3-3 3H3q-3 0-3-3z" fill="#244a80" /><path d="M9 11h5v5H9z" fill="#f25022" /><path d="M15 11h5v5h-5z" fill="#7fba00" /><path d="M9 17h5v5H9z" fill="#00a4ef" /><path d="M15 17h5v5h-5z" fill="#ffb900" /></svg> },
  { el: (
    <div className="relative h-[30px] w-[30px]">
      <svg viewBox="0 0 30 30" className="size-[30px]">
        <defs>
          <linearGradient id="cp1" x1=".5" y1="0" x2=".3" y2="1"><stop offset="0" stopColor="#1a7be8" /><stop offset=".5" stopColor="#27b48c" /><stop offset="1" stopColor="#f2c81e" /></linearGradient>
          <linearGradient id="cp2" x1=".8" y1="0" x2=".3" y2="1"><stop offset="0" stopColor="#b25bf0" /><stop offset=".5" stopColor="#ee5a94" /><stop offset="1" stopColor="#f9a05a" /></linearGradient>
        </defs>
        <path d="M6 1h14l-4 4-5 16H3q-4 0-3-4L4 4q1-3 2-3z" fill="url(#cp1)" /><path d="M20 1q3 0 4 5h-8l-3 1q1-5 3-6z" fill="#1747c9" /><path d="M19 8h8q4 0 3 4l-4 13q-1 3-4 3H9l4-4z" fill="url(#cp2)" />
      </svg>
      <span className="absolute left-[9px] top-[20px] w-[21px] rounded-[2px] bg-black text-center font-['Inter',sans-serif] text-[7.500px] font-bold leading-[9px] text-white">M365</span>
    </div>) },
  { el: <div className="flex size-[30px] items-center justify-center bg-[#1f1c20]"><FaGithub className="size-[27px] text-white" /></div> },
  { el: <ChromeLogo /> },
  { el: <span className="rounded-full bg-black"><FaSpotify className="size-[28px] text-[#1ed760]" /></span>, run: true },
  { el: <svg viewBox="0 0 30 30" className="size-[30px]"><path d="M9 1h12l8 8v12l-8 8H9l-8-8V9z" fill="#e6e8ec" stroke="#55585e" /><circle cx="15" cy="15" r="11.500" fill="#0e2a5c" /><path d="M4 12a11.500 11.500 0 0 1 22 0z" fill="#3f444e" /><path d="M8 10l2.500 9.500h2L15 13l2.500 6.500h2L22 10" fill="none" stroke="#fff" strokeWidth="2.800" /></svg>, run: true },
  { el: (
    <svg viewBox="0 0 30 28" className="h-[28px] w-[30px]">
      <defs><linearGradient id="vp" x1=".3" y1="0" x2=".6" y2="1"><stop offset="0" stopColor="#6b4bf5" /><stop offset=".5" stopColor="#5d84f2" /><stop offset="1" stopColor="#35dcc0" /></linearGradient></defs>
      <path d="M0 2Q0 0 3 0l24 3q4 1 2 4L17 27q-2 2-3 0z" fill="#c0b5f8" /><path d="M0 3l20 3q4 1 2 4l-8 15z" fill="url(#vp)" /><path d="M22 8l-8 16 3 3L29 7z" fill="#bdc9f8" />
    </svg>), run: true },
  { el: <div className="relative h-[28px] w-[28px]"><svg viewBox="0 0 28 28" className="size-[28px]"><path d="M14 4h13v20H14z" fill="#fff" stroke="#2b579a" strokeWidth="1.500" /><path d="M16 8h8M16 11h8M16 14h8M16 17h8M16 20h8" stroke="#2b579a" strokeWidth="1.500" /><path d="M0 3l16-3v28L0 25z" fill="#2b579a" /></svg><span className="absolute left-[2px] top-[6px] font-['Open_Sans',sans-serif] text-[13px] font-bold leading-[16px] text-white">W</span></div>, run: true },
  { el: <svg viewBox="0 0 27 27" className="size-[27px]"><rect width="27" height="27" rx="2" fill="#1d62b8" /><path d="M17 0h8q2 0 2 2v22z" fill="#6d4f9c" /><path d="M0 25l10-14q3-3 6 0l11 13q0 3-3 3H2q-2 0-2-2z" fill="#35bdf2" /><path d="M5 27l9-9 9 9z" fill="#1c86dc" /><circle cx="20" cy="5" r="2.700" fill="#fff" /></svg>, run: true },
  { el: <svg viewBox="0 0 30 30" className="size-[30px]"><path d="M22 0l7 3.500v23L22 30l-1.500-.5L20.500.5z" fill="#29a8f2" /><path d="M22 0L0 19v3l2 2h2L22 9z" fill="#0a86cf" /><path d="M22 30L0 11V8l2-2h2l18 15z" fill="#0f78bd" /></svg>, run: true },
  { el: (
    <div className="relative size-[30px]">
      <ChromeLogo />
      <span className="absolute left-[16px] -top-[6px] flex size-[20px] items-center justify-center rounded-full bg-[#455a64] font-['Roboto',sans-serif] text-[11px] font-bold text-[#dfe5e8]">C</span>
      <span className="absolute left-[15px] top-[15px] flex size-[15px] items-center justify-center rounded-full bg-[#455a64] font-['Roboto',sans-serif] text-[9px] text-white">C</span>
    </div>), run: true, active: true },
];

function ChromeLogo() {
  return (
    <svg viewBox="0 0 30 30" className="size-[30px]">
      <path d="M15 0a15 15 0 0 1 13 7.500H15A7.500 7.500 0 0 0 8.500 11.300L2 7.500A15 15 0 0 1 15 0z" fill="#ea4335" />
      <path d="M2 7.500l6.500 11.300A7.500 7.500 0 0 0 15 22.500L14 30A15 15 0 0 1 2 7.500z" fill="#34a853" />
      <path d="M28 7.500A15 15 0 0 1 14.500 30l7-11.300A7.500 7.500 0 0 0 21 10.500L15 7.500z" fill="#fbbc05" />
      <circle cx="15" cy="15" r="7.500" fill="#fff" /><circle cx="15" cy="15" r="5.800" fill="#2f7df0" />
    </svg>
  );
}

function Taskbar() {
  return (
    <div className="flex h-[60px] items-center bg-linear-to-r from-[#dfeaf3] via-[#d6dbef] via-50% to-[#dceaf4] font-['Open_Sans',sans-serif]">
      <div className="ml-[494px] flex">
        {taskIcons.map((t, i) => (
          <div key={i} className="flex h-[60px] w-[55.050px] shrink-0 items-center justify-center">
            <div className={`flex h-[48px] w-[48px] flex-col items-center pt-[9px] ${t.active ? "rounded-[5px] bg-[#eef1f9] shadow-[0_0_1px_#a9aebb]" : ""}`}>
              <div className="flex h-[30px] items-center justify-center">{t.el}</div>
              {t.run && <div className={`mt-[5px] h-[4px] shrink-0 rounded-full ${t.active ? "w-[20px] bg-[#0078d4]" : "w-[8px] bg-[#80848f]"}`} />}
            </div>
          </div>
        ))}
      </div>
      <svg viewBox="0 0 16 9" className="ml-[197px] h-[9px] w-[16px] shrink-0" fill="none" stroke="#111" strokeWidth="1.500"><path d="M.5 8.500L8 1l7.500 7.500" /></svg>
      <svg viewBox="0 0 18 18" className="ml-[14px] size-[17px] shrink-0" fill="none" stroke="#111" strokeWidth="1.300"><path d="M1 17A17 17 0 0 1 17 1M5 17A13 13 0 0 1 17 5.500M9 17a9 9 0 0 1 8-8M12.500 17a5 5 0 0 1 4.500-4" /><circle cx="15.500" cy="15.500" r="1.500" fill="#111" /></svg>
      <svg viewBox="0 0 20 18" className="ml-[12px] h-[18px] w-[20px] shrink-0"><path d="M.7 3.700h16v9H.7zM17 6h1.500v4" fill="none" stroke="#000" strokeWidth="1.400" /><path d="M2.500 5.500h13v5.500h-13z" /><circle cx="14" cy="12.500" r="5.400" fill="#0f8a1e" /><path d="M14 16V9.500M11.500 12L14 9.500l2.500 2.500" fill="none" stroke="#fff" strokeWidth="1.300" /></svg>
      <svg viewBox="0 0 21 18" className="ml-[9px] h-[18px] w-[21px] shrink-0" fill="none" stroke="#111" strokeWidth="1.300"><path d="M1 6h3l4-4v14l-4-4H1zM11 6.500q2 2.500 0 5M14 4q4 5 0 10M17 1.500q6 7.500 0 15" /></svg>
      <svg viewBox="0 0 21 18" className="ml-[9px] h-[18px] w-[21px] shrink-0"><path d="M4 13a4 4 0 0 1 0-8 6 6 0 0 1 11-1q3 1 3 5t-4 4z" fill="#8d8d8d" stroke="#333" /><circle cx="15" cy="12.500" r="5.400" fill="#d9222f" /><path d="M13 10.500l4 4M17 10.500l-4 4" stroke="#fff" strokeWidth="1.500" /></svg>
      <div className="ml-[11px] w-[70px] text-center text-[15px] leading-[21.500px] tracking-[-0.5px] text-[#111]"><div>4:50 PM</div><div>4/28/2025</div></div>
      <svg viewBox="0 0 20 20" className="ml-[22px] size-[20px] shrink-0"><path d="M0 0h20v17h-7l-3 3-3-3H0z" /><path d="M4 5h12M4 9h12M4 13h7" stroke="#fff" strokeWidth="1.200" /></svg>
      <div className="ml-[25px] h-[60px] w-px bg-[#aab7c4]" />
    </div>
  );
}

const marks = ["mt-[273px] h-[10px]", "mt-[2px] h-[10px]", "mt-[11px] h-[18px]", "mt-[81px] h-[10px]", "mt-[29px] h-[22px]", "mt-[27px] h-[10px]", "mt-[9px] h-[11px]", "mt-[11px] h-[20px]", "mt-[13px] h-[10px]"];

export default function App() {
  return (
    <div className="flex h-[1080px] w-[1920px] flex-col overflow-hidden bg-[#1b1b1b]">
      <div className={`flex h-[1020px] border-t border-l border-[#7490a8] ${ember}`}>
        <div className="flex w-[8px] shrink-0 flex-col"><div className="h-[979px] bg-[#2b2b2b]" /><div className="flex-1 bg-[#0066b8]" /></div>
        <div className="w-[1903px] shrink-0 bg-[#1a1a1a]">
          <div className="flex h-[1012px] flex-col overflow-hidden rounded-[10px]">
            <TabStrip />
            <Toolbar />
            <div className="flex h-[844px]">
              <div className="flex w-[1876px] flex-col">
                <AwsHeader />
                <Breadcrumbs />
                <div className="flex h-[616px] shrink-0 overflow-hidden"><Sidebar /><Records /></div>
                <Footer />
              </div>
              <div className="flex w-[27px] flex-col items-center bg-[#fcfcfc] pt-[9px]">
                <ArrowUp />
                <div className="mt-[164px] h-[623px] w-[17px] shrink-0 rounded-full bg-[#8b8b8b]" />
                <div className="mt-[13px]"><ArrowDown /></div>
              </div>
            </div>
          </div>
          <div className="h-[7px] w-[57px] bg-[#0066b8]" />
        </div>
        <div className="w-[8px] shrink-0 bg-[#1c1c1c] pl-[2px]">{marks.map((m) => <div key={m} className={`${m} bg-[#b01414]`} />)}</div>
      </div>
      <Taskbar />
    </div>
  );
}
